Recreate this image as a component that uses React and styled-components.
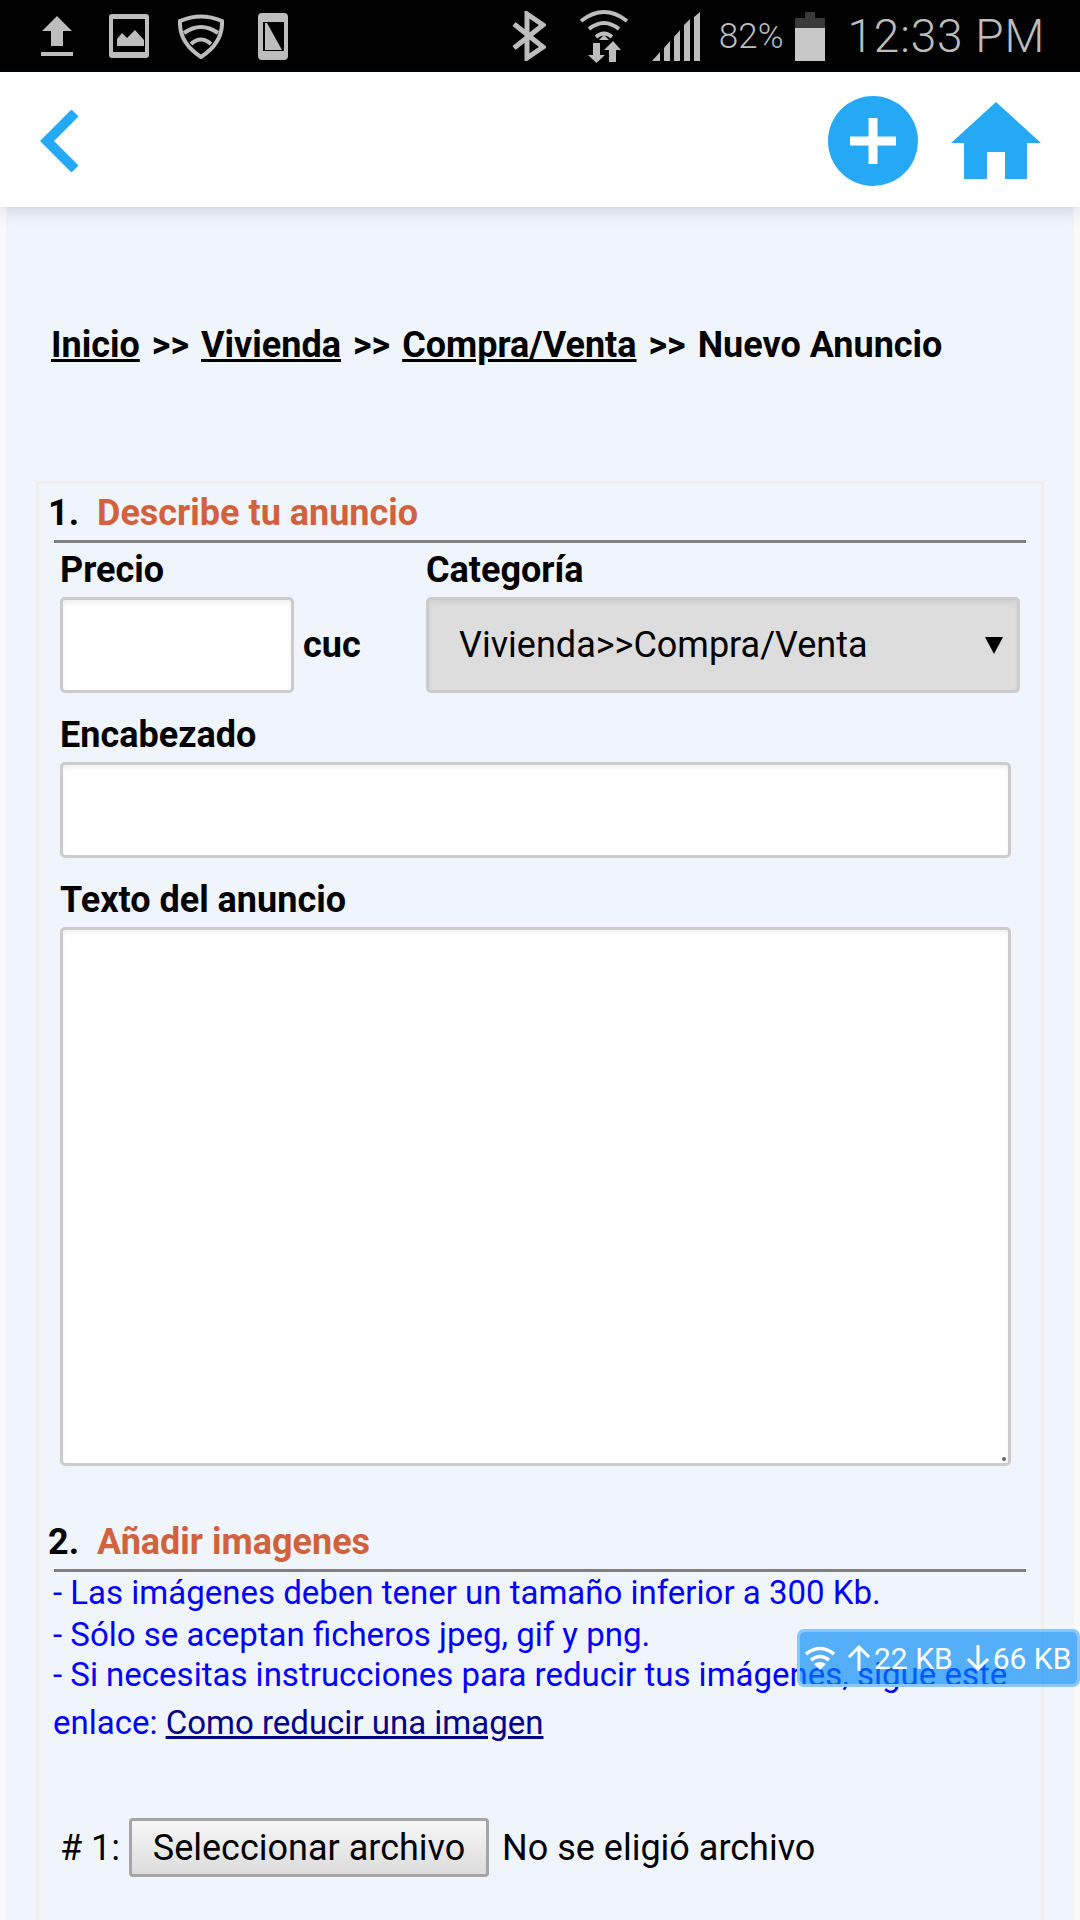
import React from "react";
import styled, { createGlobalStyle } from "styled-components";

const GlobalStyle = createGlobalStyle`
  html, body {
    margin: 0;
    padding: 0;
    height: 1920px;
    overflow: hidden;
    background: #fafafa;
    font-family: Roboto, "Liberation Sans", sans-serif;
  }
  * {
    box-sizing: border-box;
  }
`;

const Screen = styled.div`
  position: relative;
  width: 1080px;
  height: 1920px;
  overflow: hidden;
`;

const StatusBar = styled.div`
  height: 72px;
  background: #000;
  color: #bdbdbd;
  display: flex;
  align-items: center;
  padding: 0 35px 0 41px;
`;

const StatusGroup = styled.div`
  display: flex;
  align-items: center;
  margin-left: ${(p) => (p.$right ? "auto" : "0")};
`;

const StatusIcon = styled.svg`
  display: block;
  margin-left: ${(p) => p.$gap || 0}px;
  fill: #bdbdbd;
`;

const Percent = styled.span`
  font-size: 35px;
  font-weight: 300;
  margin-left: 19px;
`;

const Clock = styled.span`
  font-size: 46px;
  font-weight: 300;
  margin-left: 23px;
  letter-spacing: 0.8px;
`;

const Header = styled.header`
  position: relative;
  z-index: 1;
  height: 135px;
  background: #fff;
  box-shadow: 0 3px 18px rgba(40, 60, 100, 0.2);
  display: flex;
  align-items: center;
  padding: 2px 39px 0 40px;
`;

const HeaderActions = styled.div`
  margin-left: auto;
  display: flex;
  align-items: center;
  gap: 33px;
`;

const Main = styled.main`
  margin: 0 6px;
  height: 1713px;
  background: #f0f4fb;
  padding: 118px 30px 0;
`;

const Breadcrumb = styled.nav`
  height: 40px;
  line-height: 40px;
  margin-left: 15px;
  font-size: 36px;
  font-weight: 700;
  color: #000;
  white-space: pre;

  a {
    color: #000;
    text-decoration: underline;
  }
`;

const Separator = styled.span`
  margin: 0 12px;
`;

const Panel = styled.section`
  margin-top: 116px;
  height: 1500px;
  border: 3px solid #eeeeee;
`;

const SectionTitle = styled.h2`
  margin: ${(p) => p.$top}px 0 0;
  height: 56px;
  line-height: 59px;
  padding-left: 9px;
  font-size: 36px;
  font-weight: 700;
  color: #000;
  white-space: pre;

  span {
    color: #d0623d;
  }
`;

const Rule = styled.hr`
  margin: 0 15px;
  border: 0;
  height: 3px;
  background: #808080;
`;

const Fields = styled.div`
  padding: 0 21px;
`;

const Row = styled.div`
  display: flex;
`;

const Label = styled.div`
  height: 54px;
  line-height: 54px;
  margin-top: ${(p) => p.$top || 0}px;
  font-size: 36px;
  font-weight: 700;
  color: #000;
`;

const PriceColumn = styled.div`
  width: 366px;
`;

const CategoryColumn = styled.div`
  width: 594px;
`;

const PriceLine = styled.div`
  display: flex;
  align-items: center;
  gap: 9px;
  font-size: 36px;
  font-weight: 700;
`;

const TextInput = styled.input`
  display: block;
  width: ${(p) => p.$width}px;
  height: 96px;
  border: 3px solid #cccccc;
  border-radius: 5px;
  background: #fff;
  box-shadow: inset 0 3px 4px rgba(0, 0, 0, 0.06);
  outline: none;
`;

const SelectWrap = styled.div`
  position: relative;
  width: 594px;
  height: 96px;
`;

const Select = styled.select`
  appearance: none;
  width: 100%;
  height: 100%;
  border: 3px solid #cccccc;
  border-radius: 5px;
  background: #dddddd;
  box-shadow: inset 0 3px 4px rgba(0, 0, 0, 0.06);
  padding-left: 30px;
  font-family: inherit;
  font-size: 36px;
  color: #000;
  outline: none;
`;

const SelectArrow = styled.span`
  position: absolute;
  right: 17px;
  top: 40px;
  width: 0;
  height: 0;
  border-left: 9px solid transparent;
  border-right: 9px solid transparent;
  border-top: 17px solid #000;
`;

const AreaWrap = styled.div`
  position: relative;
  width: 951px;
  height: 539px;
`;

const TextArea = styled.textarea`
  display: block;
  width: 100%;
  height: 100%;
  border: 3px solid #cccccc;
  border-radius: 5px;
  background: #fff;
  box-shadow: inset 0 3px 4px rgba(0, 0, 0, 0.06);
  resize: none;
  outline: none;
`;

const Grip = styled.span`
  position: absolute;
  right: 5px;
  bottom: 5px;
  width: 4px;
  height: 4px;
  border-radius: 50%;
  background: #666;
`;

const Notes = styled.div`
  margin: 0 14px;
  color: #0000ff;
  font-size: 33px;
`;

const Note = styled.div`
  height: ${(p) => p.$height}px;
  line-height: ${(p) => p.$height}px;
  white-space: nowrap;

  a {
    color: #00008b;
    text-decoration: underline;
  }
`;

const UploadRow = styled.div`
  margin: 66px 0 0 21px;
  display: flex;
  align-items: center;
  font-size: 36px;
  color: #000;
`;

const FileButton = styled.button`
  width: 360px;
  height: 59px;
  margin: 0 13px 0 9px;
  padding: 0;
  border: 3px solid #a5a5a5;
  border-radius: 4px;
  background: linear-gradient(#f7f7f7, #dcdcdc);
  font-family: inherit;
  font-size: 36px;
  color: #000;
`;

const SpeedBadge = styled.div`
  position: absolute;
  left: 797px;
  top: 1629px;
  width: 283px;
  height: 58px;
  border: 3px solid #8cc6f8;
  border-radius: 7px;
  background: rgba(0, 137, 246, 0.65);
  background-clip: padding-box;
  color: #fff;
  font-size: 30px;
  display: flex;
  align-items: center;
  padding-left: 5px;
  white-space: nowrap;
`;

const SpeedIcon = styled.svg`
  display: block;
  flex: none;
  margin-left: ${(p) => p.$gap || 0}px;
`;

const SpeedText = styled.span`
  margin-left: ${(p) => p.$gap || 0}px;
`;

const App = () => {
  return (
    <Screen>
      <GlobalStyle />
      <StatusBar>
        <StatusGroup>
          <StatusIcon width="32" height="40" viewBox="0 0 32 40">
            <path d="M16 0 31 15H22V30H10V15H1Z" />
            <rect y="36" width="32" height="4" />
          </StatusIcon>
          <StatusIcon $gap={36} width="40" height="44" viewBox="0 0 40 44">
            <path
              fillRule="evenodd"
              d="M3 0H37Q40 0 40 3V41Q40 44 37 44H3Q0 44 0 41V3Q0 0 3 0ZM4 5V38H36V5Z"
            />
            <path d="M8 32V25L13 19 18 24 26 16 35 26V32Z" />
          </StatusIcon>
          <StatusIcon $gap={29} width="46" height="46" viewBox="0 0 46 46">
            <path
              fill="none"
              stroke="#bdbdbd"
              strokeWidth="4"
              d="M2 8Q23 -1 44 8Q45 30 23 44Q1 30 2 8Z"
            />
            <path
              fill="none"
              stroke="#bdbdbd"
              strokeWidth="4"
              d="M6 20Q23 8 40 20M13 31Q23 22 33 31"
            />
          </StatusIcon>
          <StatusIcon $gap={34} width="30" height="47" viewBox="0 0 30 47">
            <path
              fillRule="evenodd"
              d="M4 0H26Q30 0 30 4V43Q30 47 26 47H4Q0 47 0 43V4Q0 0 4 0ZM5 9V38H26V9Z"
            />
            <path d="M7 10H9L24 37H7Z" />
          </StatusIcon>
        </StatusGroup>
        <StatusGroup $right>
          <StatusIcon width="34" height="50" viewBox="0 0 34 50">
            <path
              fill="none"
              stroke="#bdbdbd"
              strokeWidth="5"
              d="M2 13 31 36 15 47V3L31 14 2 37"
            />
          </StatusIcon>
          <StatusIcon $gap={33} width="50" height="54" viewBox="0 0 50 54">
            <path
              fill="none"
              stroke="#bdbdbd"
              strokeWidth="4"
              d="M2 12Q25 -6 48 12M10 20Q25 8 40 20M17 28Q25 21 33 28"
            />
            <path d="M25 26 30 31H20Z" />
            <path d="M14 34H21V46H26L17.5 54 9 46H14Z" />
            <path d="M34 32 42 41H37V53H30V41H25Z" />
          </StatusIcon>
          <StatusIcon $gap={23} width="48" height="49" viewBox="0 0 48 49">
            <path d="M0 49 8 40V49ZM12 36 18 29V49H12ZM22 25 28 18V49H22ZM32 13 38 7V49H32ZM42 5 48 0V49H42Z" />
          </StatusIcon>
          <Percent>82%</Percent>
          <StatusIcon $gap={11} width="30" height="49" viewBox="0 0 30 49">
            <path fill="#3a3a3a" d="M10 0H20V6H30V16H0V6H10Z" />
            <rect y="16" width="30" height="33" fill="#c8c8c8" />
          </StatusIcon>
          <Clock>12:33 PM</Clock>
        </StatusGroup>
      </StatusBar>

      <Header>
        <svg width="40" height="62" viewBox="0 0 40 62">
          <path
            fill="none"
            stroke="#26a9f4"
            strokeWidth="10"
            d="M35 3 7 31 35 59"
          />
        </svg>
        <HeaderActions>
          <svg width="90" height="90" viewBox="0 0 90 90">
            <circle cx="45" cy="45" r="45" fill="#26a9f4" />
            <path fill="#fff" d="M40.5 22H49.5V40.5H68V49.5H49.5V68H40.5V49.5H22V40.5H40.5Z" />
          </svg>
          <svg width="90" height="77" viewBox="0 0 90 77">
            <path
              fill="#26a9f4"
              d="M45 0 90 41H76V77H54V50H36V77H13V41H0Z"
            />
          </svg>
        </HeaderActions>
      </Header>

      <Main>
        <Breadcrumb>
          <a href="#inicio">Inicio</a>
          <Separator>&gt;&gt;</Separator>
          <a href="#vivienda">Vivienda</a>
          <Separator>&gt;&gt;</Separator>
          <a href="#compra">Compra/Venta</a>
          <Separator>&gt;&gt;</Separator>
          Nuevo Anuncio
        </Breadcrumb>

        <Panel>
          <SectionTitle $top={0}>
            1.{"  "}
            <span>Describe tu anuncio</span>
          </SectionTitle>
          <Rule />
          <Fields>
            <Row>
              <PriceColumn>
                <Label>Precio</Label>
                <PriceLine>
                  <TextInput $width={234} />
                  cuc
                </PriceLine>
              </PriceColumn>
              <CategoryColumn>
                <Label>Categoría</Label>
                <SelectWrap>
                  <Select defaultValue="compra">
                    <option value="compra">Vivienda&gt;&gt;Compra/Venta</option>
                  </Select>
                  <SelectArrow />
                </SelectWrap>
              </CategoryColumn>
            </Row>
            <Label $top={15}>Encabezado</Label>
            <TextInput $width={951} />
            <Label $top={15}>Texto del anuncio</Label>
            <AreaWrap>
              <TextArea />
              <Grip />
            </AreaWrap>
          </Fields>
          <SectionTitle $top={47}>
            2.{"  "}
            <span>Añadir imagenes</span>
          </SectionTitle>
          <Rule />
          <Notes>
            <Note $height={42}>- Las imágenes deben tener un tamaño inferior a 300 Kb.</Note>
            <Note $height={42}>- Sólo se aceptan ficheros jpeg, gif y png.</Note>
            <Note $height={38}>- Si necesitas instrucciones para reducir tus imágenes, sigue este</Note>
            <Note $height={58}>
              enlace: <a href="#reducir">Como reducir una imagen</a>
            </Note>
          </Notes>
          <UploadRow>
            # 1:
            <FileButton type="button">Seleccionar archivo</FileButton>
            No se eligió archivo
          </UploadRow>
        </Panel>
      </Main>

      <SpeedBadge>
        <SpeedIcon width="30" height="24" viewBox="0 0 30 24">
          <path
            fill="none"
            stroke="#fff"
            strokeWidth="3.5"
            d="M1 8Q15 -3 29 8M6 14Q15 7 24 14"
          />
          <path fill="#fff" d="M15 24 9 18Q15 14 21 18Z" />
        </SpeedIcon>
        <SpeedIcon $gap={12} width="24" height="26" viewBox="0 0 24 26">
          <path
            fill="none"
            stroke="#fff"
            strokeWidth="3"
            d="M12 26V2M2 12 12 2 22 12"
          />
        </SpeedIcon>
        <SpeedText $gap={3}>22 KB</SpeedText>
        <SpeedIcon $gap={13} width="24" height="26" viewBox="0 0 24 26">
          <path
            fill="none"
            stroke="#fff"
            strokeWidth="3"
            d="M12 0V24M2 14 12 24 22 14"
          />
        </SpeedIcon>
        <SpeedText $gap={3}>66 KB</SpeedText>
      </SpeedBadge>
    </Screen>
  );
};

export default App;
